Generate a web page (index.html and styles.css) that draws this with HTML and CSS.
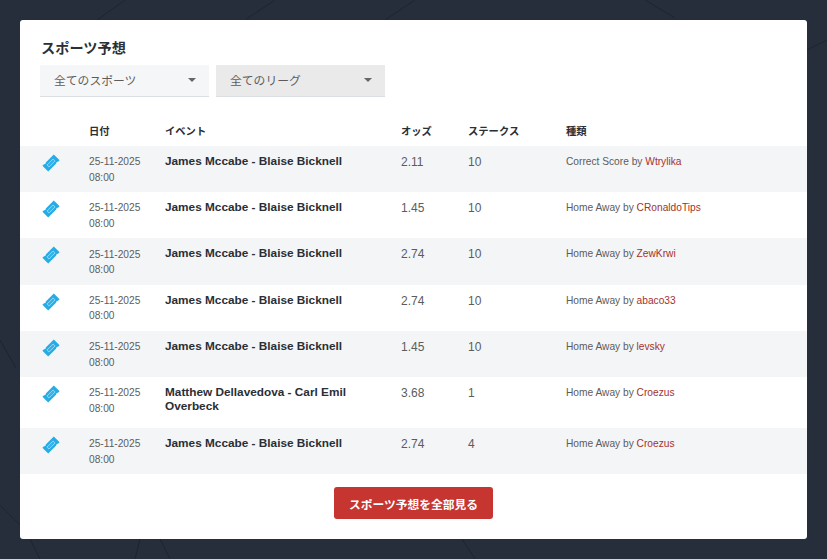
FILE: index.html
```html
<!DOCTYPE html>
<html lang="ja">
<head>
<meta charset="utf-8">
<title>スポーツ予想</title>
<link rel="stylesheet" href="styles.css">
</head>
<body>
<svg class="bg-lines" width="827" height="559" viewBox="0 0 827 559" fill="none">
  <g stroke="#1e2431" stroke-width="1">
    <path d="M97 20 L125 0"/><path d="M245 20 L275 0"/><path d="M385 20 L415 0"/><path d="M645 0 L675 18"/>
    <path d="M807 50 L827 40"/><path d="M0 340 L16 368"/><path d="M0 505 L20 525"/>
    <path d="M30 539 L40 559"/><path d="M140 539 L135 559"/><path d="M160 539 L170 559"/><path d="M462 539 L475 559"/>
  </g>
</svg>
<main class="card">
  <h1 class="title">スポーツ予想</h1>
  <div class="filters">
    <div class="select"><span>全てのスポーツ</span><i class="caret"></i></div>
    <div class="select select-active"><span>全てのリーグ</span><i class="caret"></i></div>
  </div>
  <table class="tips">
    <colgroup><col class="c-icon"><col class="c-date"><col class="c-event"><col class="c-odds"><col class="c-stake"><col></colgroup>
    <thead>
      <tr><th></th><th>日付</th><th>イベント</th><th>オッズ</th><th>ステークス</th><th>種類</th></tr>
    </thead>
    <tbody>
      <tr><td class="icon"><svg class="ticket" viewBox="0 0 18 18"><use href="#t"/></svg></td><td class="date">25-11-2025<br>08:00</td><td class="event">James Mccabe - Blaise Bicknell</td><td>2.11</td><td>10</td><td class="type">Correct Score by <a>Wtrylika</a></td></tr>
      <tr><td class="icon"><svg class="ticket" viewBox="0 0 18 18"><use href="#t"/></svg></td><td class="date">25-11-2025<br>08:00</td><td class="event">James Mccabe - Blaise Bicknell</td><td>1.45</td><td>10</td><td class="type">Home Away by <a>CRonaldoTips</a></td></tr>
      <tr><td class="icon"><svg class="ticket" viewBox="0 0 18 18"><use href="#t"/></svg></td><td class="date">25-11-2025<br>08:00</td><td class="event">James Mccabe - Blaise Bicknell</td><td>2.74</td><td>10</td><td class="type">Home Away by <a>ZewKrwi</a></td></tr>
      <tr><td class="icon"><svg class="ticket" viewBox="0 0 18 18"><use href="#t"/></svg></td><td class="date">25-11-2025<br>08:00</td><td class="event">James Mccabe - Blaise Bicknell</td><td>2.74</td><td>10</td><td class="type">Home Away by <a>abaco33</a></td></tr>
      <tr><td class="icon"><svg class="ticket" viewBox="0 0 18 18"><use href="#t"/></svg></td><td class="date">25-11-2025<br>08:00</td><td class="event">James Mccabe - Blaise Bicknell</td><td>1.45</td><td>10</td><td class="type">Home Away by <a>levsky</a></td></tr>
      <tr><td class="icon"><svg class="ticket" viewBox="0 0 18 18"><use href="#t"/></svg></td><td class="date">25-11-2025<br>08:00</td><td class="event">Matthew Dellavedova - Carl Emil Overbeck</td><td>3.68</td><td>1</td><td class="type">Home Away by <a>Croezus</a></td></tr>
      <tr><td class="icon"><svg class="ticket" viewBox="0 0 18 18"><use href="#t"/></svg></td><td class="date">25-11-2025<br>08:00</td><td class="event">James Mccabe - Blaise Bicknell</td><td>2.74</td><td>4</td><td class="type">Home Away by <a>Croezus</a></td></tr>
    </tbody>
  </table>
  <div class="actions"><a class="btn">スポーツ予想を全部見る</a></div>
</main>
<svg width="0" height="0" class="defs">
  <defs>
    <g id="t">
      <path d="M11.8 0.4 L17.6 6.2 L16 7.8 A1.5 1.5 0 0 0 14.2 9.6 L6.2 17.6 L0.4 11.8 L2 10.2 A1.5 1.5 0 0 0 3.8 8.4 Z" fill="#25ace6"/>
      <path d="M11 4.9 L13.1 7 L7 13.1 L4.9 11 Z" fill="#35b3e9" stroke="#8ed4f2" stroke-width="1"/>
    </g>
  </defs>
</svg>
</body>
</html>
```
FILE: styles.css
```css
* { box-sizing: border-box; }
html, body { margin: 0; height: 100%; }
body {
  width: 827px;
  height: 559px;
  overflow: hidden;
  background: #262d3b;
  padding: 20px;
  font-family: "Liberation Sans", "Noto Sans CJK JP", sans-serif;
  color: #212529;
}
.bg-lines { position: absolute; left: 0; top: 0; }
.defs { position: absolute; }
.card {
  position: relative;
  width: 787px;
  height: 519px;
  background: #fff;
  border-radius: 3px;
  padding-top: 18px;
}
.title {
  margin: 0 0 7px 21px;
  padding-top: 1px;
  font-size: 14.2px;
  line-height: 19px;
  font-weight: 700;
  color: #2a2e35;
}
.filters { display: flex; gap: 7px; margin-left: 20px; }
.select {
  width: 169px;
  height: 32px;
  background: #f5f6f7;
  border-bottom: 1px solid #dcdfe2;
  display: flex;
  align-items: center;
  justify-content: space-between;
  padding: 0 13px 2px 14px;
  font-size: 11.8px;
  color: #5c5c5c;
}
.select-active { background: #eaeaea; }
.caret {
  width: 0; height: 0;
  border-left: 4.5px solid transparent;
  border-right: 4.5px solid transparent;
  border-top: 4.5px solid #666;
}
.tips {
  width: 787px;
  margin-top: 19px;
  border-collapse: collapse;
  table-layout: fixed;
}
.c-icon { width: 69px; }
.c-date { width: 76px; }
.c-event { width: 236px; }
.c-odds { width: 67px; }
.c-stake { width: 98px; }
th {
  height: 30px;
  padding: 0 0 2px;
  text-align: left;
  font-size: 10.3px;
  font-weight: 700;
  color: #2a2e35;
  vertical-align: middle;
}
td {
  padding: 9px 20px 7px 0;
  vertical-align: top;
  font-size: 12px;
  line-height: 14px;
  color: #5c5c5c;
}
tbody tr:nth-child(odd) { background: #f4f5f7; }
.icon { padding: 8px 0 0 22px; }
.ticket { display: block; width: 18px; height: 18px; }
.date { font-size: 10.2px; line-height: 15.5px; padding: 8.3px 0 6.9px; }
.event { font-size: 11.8px; line-height: 14.5px; padding: 8px 20px 14px 0; font-weight: 700; color: #2a2e35; }
.type { font-size: 10.2px; }
.type a { color: #a5312b; }
.actions { display: flex; justify-content: center; margin-top: 13px; }
.btn {
  width: 159px;
  height: 32px;
  display: flex;
  align-items: center;
  justify-content: center;
  background: #c73531;
  border-radius: 3px;
  color: #fff;
  font-size: 11.75px;
  font-weight: 700;
}
```
